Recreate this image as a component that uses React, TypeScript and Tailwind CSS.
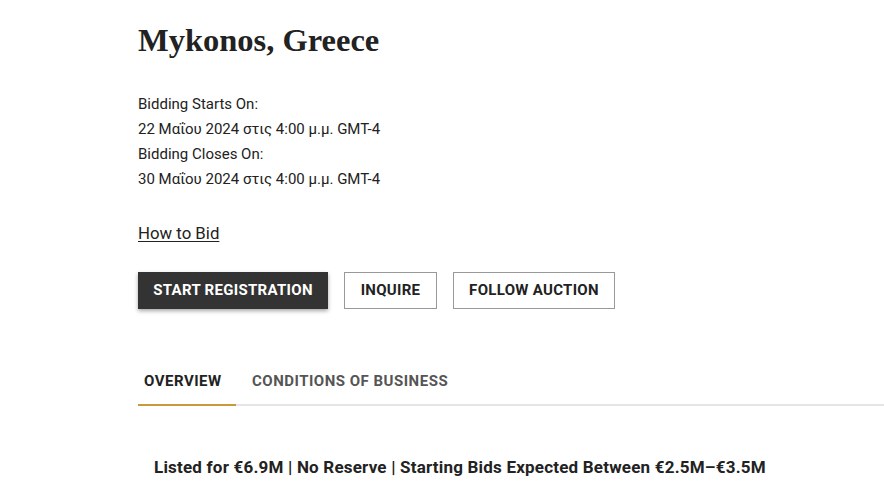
export default function App() {
  const sans = { fontFamily: 'Roboto, "Liberation Sans", sans-serif' };
  return (
    <div className="w-[884px] h-[500px] bg-white overflow-hidden" style={sans}>
      <div className="pl-[138px]">
        <h1
          className="pt-[20px] text-[32.5px] leading-[40px] font-bold text-[#222]"
          style={{ fontFamily: '"Liberation Serif", "DejaVu Serif", serif' }}
        >
          Mykonos, Greece
        </h1>
        <div className="mt-[32px] text-[15px] leading-[25px] text-[#222]">
          <div>Bidding Starts On:</div>
          <div>22 Μαΐου 2024 στις 4:00 μ.μ. GMT-4</div>
          <div>Bidding Closes On:</div>
          <div>30 Μαΐου 2024 στις 4:00 μ.μ. GMT-4</div>
        </div>
        <div className="mt-[29px]">
          <a className="text-[16.8px] leading-[24px] text-[#222] underline underline-offset-2">How to Bid</a>
        </div>
        <div className="mt-[26px] flex gap-[16px]">
          <button className="h-[37px] w-[190px] bg-[#333] text-white text-[15px] font-bold tracking-[0.3px] shadow-[0_2px_4px_rgba(0,0,0,0.35)]">
            START REGISTRATION
          </button>
          <button className="h-[37px] w-[93px] border border-[#999] text-[#222] text-[15px] font-bold tracking-[0.3px]">
            INQUIRE
          </button>
          <button className="h-[37px] w-[162px] border border-[#999] text-[#222] text-[15px] font-bold tracking-[0.3px]">
            FOLLOW AUCTION
          </button>
        </div>
        <div className="mt-[61px] flex border-b-2 border-[#e5e5e5] text-[15px] font-bold tracking-[0.5px]">
          <div className="w-[98px] pl-[6px] pb-[11px] border-b-2 border-[#c99a3c] -mb-[2px] text-[#222]">OVERVIEW</div>
          <div className="pl-[16px] pb-[11px] text-[#555]">CONDITIONS OF BUSINESS</div>
        </div>
        <div className="mt-[49px] pl-[16px] text-[17px] font-bold tracking-[0.2px] text-[#222]">
          Listed for €6.9M | No Reserve | Starting Bids Expected Between €2.5M–€3.5M
        </div>
      </div>
    </div>
  );
}
